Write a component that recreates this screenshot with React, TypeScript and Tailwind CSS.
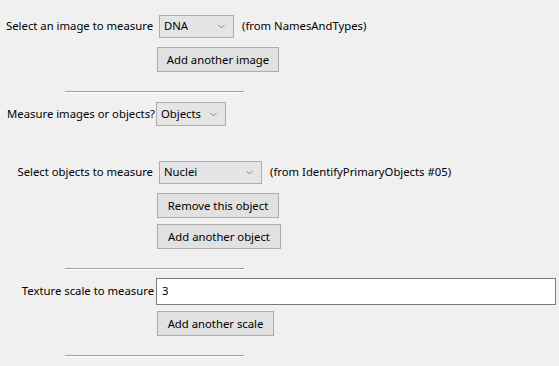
import { ChevronDown } from 'lucide-react'

function Select({ value, width }: { value: string; width: string }) {
  return (
    <div
      className={`${width} h-[23px] flex items-center justify-between pl-[4px] pr-[6px] bg-[#e5e5e5] border border-[#adadad] text-black`}
    >
      <span>{value}</span>
      <ChevronDown className="w-[11px] h-[11px] text-[#606060]" strokeWidth={1.5} />
    </div>
  )
}

function Button({ label, className = '' }: { label: string; className?: string }) {
  return (
    <button
      className={`h-[25px] px-[4px] bg-[#e1e1e1] border border-[#adadad] text-black leading-none whitespace-nowrap text-center ${className}`}
    >
      {label}
    </button>
  )
}

function Separator({ className = '' }: { className?: string }) {
  return (
    <div className={`ml-[65px] w-[179px] border-t border-t-[#a0a0a0] border-b border-b-white ${className}`} />
  )
}

export default function App() {
  return (
    <div className="w-[559px] h-[366px] overflow-hidden bg-[#f0f0f0] text-[11.3px] text-black font-['Segoe_UI','Noto_Sans',sans-serif]">
      <div className="flex flex-col pt-[15px]">
        {/* image row */}
        <div className="flex items-center">
          <div className="w-[156px] pr-[3px] text-right whitespace-nowrap">Select an image to measure</div>
          <div className="ml-[3px]">
            <Select value="DNA" width="w-[75px]" />
          </div>
          <span className="ml-[8px]">(from NamesAndTypes)</span>
        </div>
        <div className="mt-[9px] pl-[157px] flex">
          <Button label="Add another image" className="w-[122px]" />
        </div>

        <Separator className="mt-[19px]" />

        {/* images or objects */}
        <div className="mt-[9px] flex items-center">
          <div className="w-[156px] pr-[1px] text-right whitespace-nowrap">Measure images or objects?</div>
          <div className="h-[24px] w-[70px] flex items-center justify-between pl-[4px] pr-[6px] bg-[#e5e5e5] border border-[#adadad]">
            <span>Objects</span>
            <ChevronDown className="w-[11px] h-[11px] text-[#606060]" strokeWidth={1.5} />
          </div>
        </div>

        {/* objects row */}
        <div className="mt-[35px] flex items-center">
          <div className="w-[156px] pr-[3px] text-right whitespace-nowrap">Select objects to measure</div>
          <div className="ml-[3px]">
            <Select value="Nuclei" width="w-[103px]" />
          </div>
          <span className="ml-[8px]">(from IdentifyPrimaryObjects #05)</span>
        </div>
        <div className="mt-[9px] pl-[157px] flex">
          <Button label="Remove this object" className="w-[122px]" />
        </div>
        <div className="mt-[6px] pl-[157px] flex">
          <Button label="Add another object" className="w-[124px]" />
        </div>

        <Separator className="mt-[19px]" />

        {/* texture scale */}
        <div className="mt-[8px] flex items-center">
          <div className="w-[156px] pr-[2px] text-right whitespace-nowrap">Texture scale to measure</div>
          <div className="w-[400px] h-[27px] flex items-center pl-[5px] bg-white border border-[#7a7a7a]">
            3
          </div>
        </div>
        <div className="mt-[6px] pl-[157px] flex">
          <Button label="Add another scale" className="w-[117px]" />
        </div>

        <Separator className="mt-[19px]" />
      </div>
    </div>
  )
}
